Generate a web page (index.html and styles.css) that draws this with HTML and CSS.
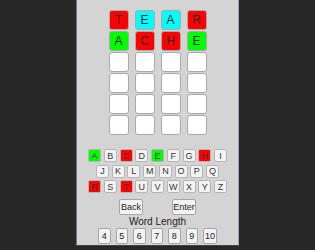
FILE: index.html
```html
<!DOCTYPE html>
<html lang="en">
<head>
    <meta charset="UTF-8">
    <title>Word Game</title>
    <link rel="stylesheet" href="styles.css">
</head>
<body>
    <div class="panel">
        <div class="board">
            <div class="tile red">T</div>
            <div class="tile cyan">E</div>
            <div class="tile cyan">A</div>
            <div class="tile red">R</div>
            <div class="tile green">A</div>
            <div class="tile red">C</div>
            <div class="tile red">H</div>
            <div class="tile green">E</div>
            <div class="tile"></div><div class="tile"></div><div class="tile"></div><div class="tile"></div>
            <div class="tile"></div><div class="tile"></div><div class="tile"></div><div class="tile"></div>
            <div class="tile"></div><div class="tile"></div><div class="tile"></div><div class="tile"></div>
            <div class="tile"></div><div class="tile"></div><div class="tile"></div><div class="tile"></div>
        </div>
        <div class="keyboard">
            <div class="key-row">
                <button class="key green">A</button>
                <button class="key">B</button>
                <button class="key red">C</button>
                <button class="key">D</button>
                <button class="key green">E</button>
                <button class="key">F</button>
                <button class="key">G</button>
                <button class="key red">H</button>
                <button class="key">I</button>
            </div>
            <div class="key-row">
                <button class="key">J</button>
                <button class="key">K</button>
                <button class="key">L</button>
                <button class="key">M</button>
                <button class="key">N</button>
                <button class="key">O</button>
                <button class="key">P</button>
                <button class="key">Q</button>
            </div>
            <div class="key-row">
                <button class="key red">R</button>
                <button class="key">S</button>
                <button class="key red">T</button>
                <button class="key">U</button>
                <button class="key">V</button>
                <button class="key">W</button>
                <button class="key">X</button>
                <button class="key">Y</button>
                <button class="key">Z</button>
            </div>
        </div>
        <div class="actions">
            <button class="btn">Back</button>
            <button class="btn">Enter</button>
        </div>
        <div class="length-label">Word Length</div>
        <div class="lengths">
            <button class="btn small">4</button>
            <button class="btn small">5</button>
            <button class="btn small">6</button>
            <button class="btn small">7</button>
            <button class="btn small">8</button>
            <button class="btn small">9</button>
            <button class="btn small wide">10</button>
        </div>
    </div>
</body>
</html>
```

FILE: styles.css
```css
body {
    margin: 0;
    height: 250px;
    background-color: #272727;
    font-family: "Liberation Sans", Arial, sans-serif;
    overflow: hidden;
}
.panel {
    width: 163px;
    height: 246px;
    margin: 0 auto;
    background-color: #d4d4d4;
    border-left: 1px solid #6f7684;
    border-right: 1px solid #9aa4b8;
    border-bottom: 1px solid #3d4350;
    box-sizing: border-box;
    padding-top: 10px;
    display: flex;
    flex-direction: column;
    align-items: center;
}
.board {
    display: grid;
    grid-template-columns: repeat(4, 20px);
    grid-auto-rows: 20px;
    column-gap: 6px;
    row-gap: 1px;
}
.tile {
    box-sizing: border-box;
    border: 1px solid #a9a9a9;
    border-radius: 3px;
    background-color: #fff;
    color: #2a2a2a;
    font-size: 12px;
    display: flex;
    align-items: center;
    justify-content: center;
}
.red {
    background-color: #ff0000;
}
.cyan {
    background-color: #00ffff;
}
.green {
    background-color: #00ff00;
}
.keyboard {
    margin-top: 14px;
    display: flex;
    flex-direction: column;
    gap: 2.5px;
}
.key-row {
    display: flex;
    justify-content: center;
    gap: 2.75px;
}
.key {
    box-sizing: border-box;
    width: 13px;
    height: 13px;
    padding: 0;
    border: 1px solid #b5b5b5;
    border-radius: 2px;
    background-color: #f3f3f3;
    color: #333;
    font-family: "Liberation Sans", Arial, sans-serif;
    font-size: 9px;
}
.key.red {
    background-color: #ff0000;
}
.key.green {
    background-color: #00ff00;
}
.actions {
    margin-top: 6px;
    display: flex;
    gap: 29px;
}
.btn {
    box-sizing: border-box;
    width: 24px;
    height: 16px;
    padding: 0;
    border: 1px solid #a5a5a5;
    border-radius: 2px;
    background-color: #f3f3f3;
    color: #222;
    font-family: "Liberation Sans", Arial, sans-serif;
    font-size: 9px;
}
.length-label {
    margin-top: 1px;
    font-size: 10px;
    line-height: 12px;
    color: #222;
}
.lengths {
    display: flex;
    gap: 5px;
}
.btn.small {
    width: 12.5px;
}
.btn.wide {
    width: 14px;
}
```
